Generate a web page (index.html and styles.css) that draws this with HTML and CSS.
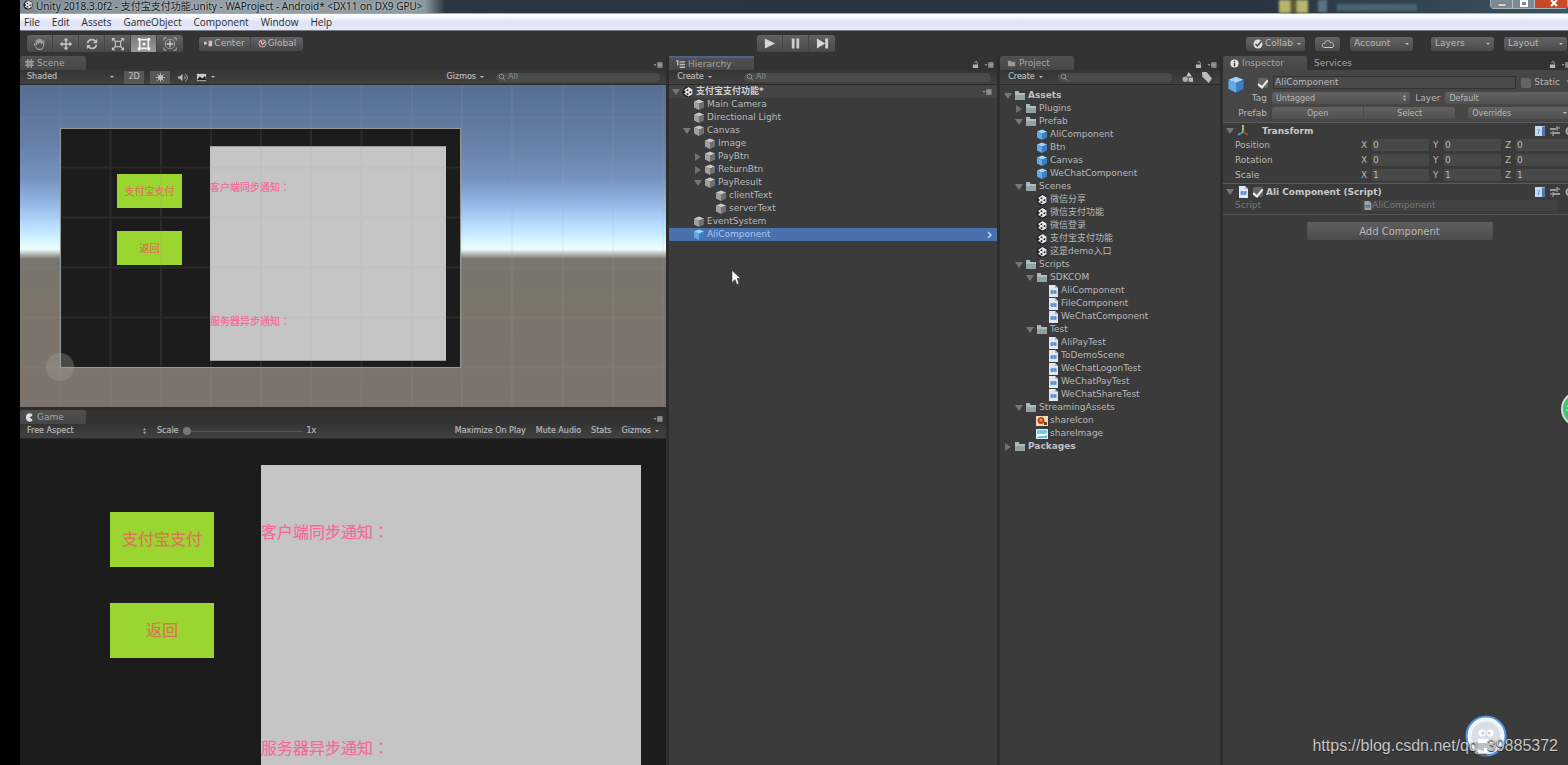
FILE: index.html
```html
<!DOCTYPE html>
<html lang="zh-CN">
<head>
<meta charset="utf-8">
<title>Unity 2018.3.0f2</title>
<link rel="stylesheet" href="styles.css">
</head>
<body>
<svg class="defs" aria-hidden="true">
  <defs>
    <symbol id="cube" viewBox="0 0 12 12"><path d="M6 .5 11 2.500 6 4.700 1 2.500Z" fill="var(--top)"/><path d="M1 2.500 6 4.700v6.400L1 8.500Z" fill="var(--left)"/><path d="M11 2.500 6 4.700v6.400l5-2.600Z" fill="var(--right)"/></symbol>
    <symbol id="folder" viewBox="0 0 12 12"><path d="M1 2h4l1 1h5v7H1Z" fill="#75878a"/><path d="M1 1h4v2H1Z" fill="#a5b6b7"/><path d="M1 4h10v6H1Z" fill="#93a3a4"/><path d="M1 3h10v2H1Z" fill="#b0bdbd"/></symbol>
    <symbol id="unity" viewBox="0 0 12 12"><circle cx="6" cy="6" r="5.500" fill="#222"/><path d="M6.500 1 10.500 3.400v4.800L6.500 10.600 2 7.800 4 6 2 4Z" fill="#ececec"/><path d="M7 6.200 9.300 4.800v2.600Zm-.700-.800L4 4.200 6.300 3Zm0 1.400v2.600L4 8Z" fill="#1c1c1c"/></symbol>
    <symbol id="script" viewBox="0 0 12 12"><path d="M2 0h6l3 3v9H2Z" fill="#dfe7f2"/><path d="M8 0v3h3" fill="#a9b6c8"/><path d="M3.500 5h6v4h-6Z" fill="#8fb0df"/><path d="M5.800 6H4.300v2h1.500M6.600 6.200h2.800M6.600 7.800h2.800" fill="none" stroke="#4d7fc8"/></symbol>
    <symbol id="menu" viewBox="0 0 12 8"><path d="M0 3h4L2 5Z" fill="#b5b5b5"/><path d="M5 1h7v6H5Z" fill="#777"/><path d="M5 1h7M5 3h7M5 5h7M5 7h7" stroke="#a8a8a8"/></symbol>
    <symbol id="lock" viewBox="0 0 8 8"><path d="M1 4h6v4H1Z" fill="#b5b5b5"/><path d="M3 2c0-2 3-2 3 0v2" fill="none" stroke="#aaa"/></symbol>
    <symbol id="search" viewBox="0 0 10 8"><circle cx="3.500" cy="3.500" r="2.300" fill="none" stroke="#8f8f8f"/><path d="m5 5 2 2.500" stroke="#8f8f8f"/></symbol>
    <symbol id="sheet" viewBox="0 0 10 10"><path d="M0 0h10v10H0Z" fill="#8fb4e2"/><path d="M0 0h7v10H0Z" fill="#c3d9f2"/><path d="M7 1h3v9H7Z" fill="#5279ad"/><path d="M2.500 4c2-1 3 1 1 1.500V8" stroke="#5f8fca" fill="none"/></symbol>
    <symbol id="preset" viewBox="0 0 10 10"><path d="M0 3h6M3 7h7" stroke="#bbb" stroke-width="1.500"/><path d="M7 0v5M3 5v5M7 2h3M0 7h2" stroke="#bbb"/></symbol>
    <symbol id="gear" viewBox="0 0 10 10"><circle cx="5" cy="5" r="3.500" fill="none" stroke="#aaa" stroke-width="2"/></symbol>
  </defs>
</svg>

<main class="window">
  <header class="titlebar">
    <svg class="icon unity-logo"><use href="#unity"/></svg>
    <h1 class="title">Unity 2018.3.0f2 - 支付宝支付功能.unity - WAProject - Android* &lt;DX11 on DX9 GPU&gt;</h1>
    <div class="desktop-glimpse" aria-hidden="true"><span class="glimpse-yellow"></span><span class="glimpse-blue"></span><span class="glimpse-line"></span></div>
    <div class="caption-buttons">
      <button class="caption" aria-label="Minimize"><svg viewBox="0 0 12 8"><path d="M2 4h8v2H2Z" fill="#fff" stroke="#555" stroke-width=".500"/></svg></button>
      <button class="caption" aria-label="Restore"><svg viewBox="0 0 12 8"><path d="M3 1h6v5H3Z" fill="none" stroke="#fff" stroke-width="2"/></svg></button>
      <button class="caption caption-close" aria-label="Close"><svg viewBox="0 0 12 8"><path d="m3 0 6 6m0-6L3 6" stroke="#fff" stroke-width="2"/></svg></button>
    </div>
  </header>

  <nav class="menubar">
    <button>File</button><button>Edit</button><button>Assets</button><button>GameObject</button><button>Component</button><button>Window</button><button>Help</button>
  </nav>

  <section class="toolbar">
    <div class="tool-left">
      <div class="group tools">
        <button aria-label="Hand"><svg viewBox="0 0 16 16"><path d="M5 14c-1-3-4-4-3.500-6 1-.700 2 .500 2.500 1L3.500 4c.700-1 1.500 0 1.500.500l1 3L6 2.500c.700-1 1.500 0 1.500.500l.500 4 .500-4c.700-1 1.500 0 1.500.500V7.500l1.500-3c1-.500 1.500.500 1 1.500-.500 3-.500 6-2.500 8Z" fill="none" stroke="#bbb"/></svg></button>
        <button aria-label="Move"><svg viewBox="0 0 16 16"><path d="M8 3v10M3 8h10" stroke="#bbb" stroke-width="2"/><path d="m8 1 3 3H5Zm0 14 3-3H5ZM1 8l3-3v6Zm14 0-3-3v6Z" fill="#c6c6c6"/></svg></button>
        <button aria-label="Rotate"><svg viewBox="0 0 16 16"><path d="M3 7c1-5 7-5 9-2M13 9c-1 5-7 5-9 2" fill="none" stroke="#c2c2c2" stroke-width="2"/><path d="M14 2v5H9ZM2 14V9h5Z" fill="#c2c2c2"/></svg></button>
        <button aria-label="Scale"><svg viewBox="0 0 16 16"><path d="M5 5h6v6H5Z" fill="none" stroke="#bbb" stroke-width="1.500"/><path d="m2 2 3 3m6 6 3 3m0-12-3 3m-6 6-3 3" stroke="#bbb" stroke-width="1.500"/><path d="M1 1h4L1 5Zm14 0v4l-4-4ZM1 15v-4l4 4Zm14 0h-4l4-4Z" fill="#c6c6c6"/></svg></button>
        <button class="is-on" aria-label="Rect"><svg viewBox="0 0 16 16"><path d="M3 3h10v10H3Z" fill="none" stroke="#eee" stroke-width="2"/><path d="M1 1h3v3H1Zm11 0h3v3h-3ZM1 12h3v3H1Zm11 0h3v3h-3ZM6.500 6.500h3v3h-3Z" fill="#fff"/></svg></button>
        <button aria-label="Transform"><svg viewBox="0 0 16 16"><circle cx="8" cy="8" r="5.500" fill="none" stroke="#aaa"/><path d="M8 4v8M4 8h8" stroke="#ccc" stroke-width="1.500"/><path d="M1 4V1h3m8 0h3v3M1 12v3h3m8 0h3v-3" fill="none" stroke="#bbb"/></svg></button>
      </div>
      <div class="group pivots">
        <button><svg viewBox="0 0 10 10"><path d="M0 3h3v3H0Zm5-1h4v6H5Z" fill="#d0c4c4"/><path d="M3 4h3v1H3Z" fill="#a44"/></svg>Center</button>
        <button><svg viewBox="0 0 10 10"><circle cx="5" cy="5" r="4" fill="#8d5552" stroke="#bbb"/><path d="M3 2l2 4 3-3" stroke="#eee" fill="none"/></svg>Global</button>
      </div>
    </div>
    <div class="group playback">
      <button aria-label="Play"><svg viewBox="0 0 14 14"><path d="M2 1.500 13 7 2 12.500Z" fill="#d6d6d6"/></svg></button>
      <button aria-label="Pause"><svg viewBox="0 0 14 14"><path d="M3 1.500h3v11H3Zm5 0h3v11H8Z" fill="#ccc"/></svg></button>
      <button aria-label="Step"><svg viewBox="0 0 14 14"><path d="m1 1.500 9 5.500-9 5.500ZM10 1.500h3v11h-3Z" fill="#d6d6d6"/></svg></button>
    </div>
    <div class="tool-right">
      <button class="pill has-caret"><svg viewBox="0 0 10 10"><circle cx="5" cy="5" r="4.500" fill="#ddd"/><path d="m2.500 5 2 2 4-5" fill="none" stroke="#444" stroke-width="1.500"/></svg>Collab</button>
      <button class="pill cloud" aria-label="Cloud"><svg viewBox="0 0 14 10"><path d="M3.500 8.500c-3 0-3-4 0-4C4 1 9 1 9.500 3.500c4 0 4 5 1.500 5Z" fill="none" stroke="#ccc"/></svg></button>
      <button class="pill wide has-caret">Account</button>
      <button class="pill wide spaced has-caret">Layers</button>
      <button class="pill wide has-caret">Layout</button>
    </div>
  </section>

  <div class="docks">
    <div class="views">
      <section class="panel scene">
        <div class="tabs"><button class="tab"><svg viewBox="0 0 10 10"><circle cx="5" cy="5" r="4" fill="#777"/><path d="M3 0v10M7 0v10M0 3h10M0 7h10" stroke="#999" stroke-width="1.500"/></svg>Scene</button><button class="panel-menu" aria-label="Scene menu"><svg class="menu-icon"><use href="#menu"/></svg></button></div>
        <div class="strip">
          <button class="strip-item shading has-caret">Shaded</button>
          <button class="strip-item toggle">2D</button>
          <button class="strip-item toggle" aria-label="Lighting"><svg viewBox="0 0 12 12"><circle cx="6" cy="6" r="2.500" fill="#fff"/><path d="M6 1v10M1 6h10M2.500 2.500l7 7m0-7-7 7" stroke="#bbb"/></svg></button>
          <button class="strip-item" aria-label="Audio"><svg viewBox="0 0 12 12"><path d="M1 5h2l3-3v8L3 7H1Z" fill="#bbb"/><path d="M8 4c1 1 1 3 0 4m1-6c3 2 3 6 0 8" fill="none" stroke="#bbb"/></svg></button>
          <button class="strip-item has-caret" aria-label="Effects"><svg viewBox="0 0 12 12"><path d="M1 2h10v8H1Z" fill="#c8c8c8"/><path d="m1 9 3-4 3 2 3-3 1 5Z" fill="#222"/></svg></button>
          <span class="grow"></span>
          <button class="strip-item gizmos has-caret">Gizmos</button>
          <label class="search scene-search"><svg><use href="#search"/></svg><input aria-label="Search scene" placeholder="All"></label>
        </div>
        <div class="scene-view">
          <div class="ui-canvas">
            <button class="ui-btn ui-btn-pay">支付宝支付</button>
            <button class="ui-btn ui-btn-back">返回</button>
            <div class="result"><p class="note-client">客户端同步通知<span class="colon" lang="zh-TW">：</span></p><p class="note-server">服务器异步通知<span class="colon" lang="zh-TW">：</span></p></div>
          </div>
          <svg class="grid-lines" aria-hidden="true"><path d="M40.500 0v323M90.500 0v323M141 0v323M191 0v323M241 0v323M291 0v323M341.500 0v323M392 0v323M442 0v323M492 0v323M543 0v323M593 0v323M643 0v323M0 32.500h700M0 82.500h700M0 132.500h700M0 182.500h700M0 232.500h700M0 282.500h700" stroke="#b4aa96" stroke-opacity=".1" stroke-width="2"/></svg>
          <span class="pivot-dot"></span>
        </div>
      </section>

      <section class="panel game">
        <div class="tabs"><button class="tab"><svg viewBox="0 0 10 10"><path d="M8 1C3-1 1 2 1 5s2 6 7 4V7L5 5l3-2Z" fill="#ddd"/></svg>Game</button><button class="panel-menu" aria-label="Game menu"><svg class="menu-icon"><use href="#menu"/></svg></button></div>
        <div class="strip">
          <button class="strip-item aspect">Free Aspect<svg viewBox="0 0 4 8"><path d="m0 3 2-3 2 3ZM0 5l2 3 2-3Z" fill="#aaa"/></svg></button>
          <label class="scale">Scale <input type="range" min="1" max="5" value="1"><output>1x</output></label>
          <span class="grow"></span>
          <button class="strip-item">Maximize On Play</button><button class="strip-item">Mute Audio</button><button class="strip-item">Stats</button><button class="strip-item has-caret">Gizmos</button>
        </div>
        <div class="game-view">
          <div class="game-buttons"><button class="game-btn">支付宝支付</button><button class="game-btn">返回</button></div>
          <div class="game-result"><p>客户端同步通知<span class="colon" lang="zh-TW">：</span></p><p>服务器异步通知<span class="colon" lang="zh-TW">：</span></p></div>
        </div>
      </section>
    </div>

    <section class="panel hierarchy">
      <div class="tabs"><button class="tab focused"><svg viewBox="0 0 10 10"><path d="M0 1h3M2 1v5M4 2h6M4 5h6M4 8h6" stroke="#bbb" stroke-width="1.500"/></svg>Hierarchy</button><button class="panel-menu" aria-label="Hierarchy menu"><svg class="lock-icon"><use href="#lock"/></svg><svg class="menu-icon"><use href="#menu"/></svg></button></div>
      <div class="strip"><button class="strip-item create has-caret">Create</button><label class="search"><svg><use href="#search"/></svg><input aria-label="Search hierarchy" placeholder="All"></label></div>
      <ul class="tree">
        <li class="row scene-row"><i class="fold open"></i><svg class="icon"><use href="#unity"/></svg><span>支付宝支付功能*</span><svg class="menu-icon row-end"><use href="#menu"/></svg></li>
        <li class="row d1"><i class="fold"></i><svg class="icon"><use href="#cube"/></svg><span>Main Camera</span></li>
        <li class="row d1"><i class="fold"></i><svg class="icon"><use href="#cube"/></svg><span>Directional Light</span></li>
        <li class="row d1"><i class="fold open"></i><svg class="icon"><use href="#cube"/></svg><span>Canvas</span></li>
        <li class="row d2"><i class="fold"></i><svg class="icon"><use href="#cube"/></svg><span>Image</span></li>
        <li class="row d2"><i class="fold closed"></i><svg class="icon"><use href="#cube"/></svg><span>PayBtn</span></li>
        <li class="row d2"><i class="fold closed"></i><svg class="icon"><use href="#cube"/></svg><span>ReturnBtn</span></li>
        <li class="row d2"><i class="fold open"></i><svg class="icon"><use href="#cube"/></svg><span>PayResult</span></li>
        <li class="row d3"><i class="fold"></i><svg class="icon"><use href="#cube"/></svg><span>clientText</span></li>
        <li class="row d3"><i class="fold"></i><svg class="icon"><use href="#cube"/></svg><span>serverText</span></li>
        <li class="row d1"><i class="fold"></i><svg class="icon"><use href="#cube"/></svg><span>EventSystem</span></li>
        <li class="row d1 selected"><i class="fold"></i><svg class="icon prefab"><use href="#cube"/></svg><span>AliComponent</span><svg class="chevron row-end" viewBox="0 0 6 8"><path d="m1 1 3 3-3 3" fill="none" stroke="#b9d3f7" stroke-width="1.500"/></svg></li>
      </ul>
    </section>

    <section class="panel project">
      <div class="tabs"><button class="tab"><svg viewBox="0 0 10 10"><path d="M1 2h3l1 1h4v5H1Z" fill="#999"/></svg>Project</button><button class="panel-menu" aria-label="Project menu"><svg class="lock-icon"><use href="#lock"/></svg><svg class="menu-icon"><use href="#menu"/></svg></button></div>
      <div class="strip"><button class="strip-item create has-caret">Create</button><label class="search"><svg><use href="#search"/></svg><input aria-label="Search project"></label>
        <button class="strip-item" aria-label="Filter by type"><svg viewBox="0 0 10 10"><path d="m6 0 3 4H4Z" fill="#ccc"/><circle cx="3" cy="6.500" r="2.500" fill="#aaa"/><path d="M6 5h4v4H6Z" fill="#bbb"/></svg></button>
        <button class="strip-item" aria-label="Filter by label"><svg viewBox="0 0 10 10"><path d="M1 0h4l5 6-3 4-6-6Z" fill="#bbb"/></svg></button></div>
      <ul class="tree assets">
        <li class="row root"><i class="fold open"></i><svg class="icon"><use href="#folder"/></svg><span>Assets</span></li>
        <li class="row d1"><i class="fold closed"></i><svg class="icon"><use href="#folder"/></svg><span>Plugins</span></li>
        <li class="row d1"><i class="fold open"></i><svg class="icon"><use href="#folder"/></svg><span>Prefab</span></li>
        <li class="row d2"><i class="fold"></i><svg class="icon prefab"><use href="#cube"/></svg><span>AliComponent</span></li>
        <li class="row d2"><i class="fold"></i><svg class="icon prefab"><use href="#cube"/></svg><span>Btn</span></li>
        <li class="row d2"><i class="fold"></i><svg class="icon prefab"><use href="#cube"/></svg><span>Canvas</span></li>
        <li class="row d2"><i class="fold"></i><svg class="icon prefab"><use href="#cube"/></svg><span>WeChatComponent</span></li>
        <li class="row d1"><i class="fold open"></i><svg class="icon"><use href="#folder"/></svg><span>Scenes</span></li>
        <li class="row d2"><i class="fold"></i><svg class="icon"><use href="#unity"/></svg><span>微信分享</span></li>
        <li class="row d2"><i class="fold"></i><svg class="icon"><use href="#unity"/></svg><span>微信支付功能</span></li>
        <li class="row d2"><i class="fold"></i><svg class="icon"><use href="#unity"/></svg><span>微信登录</span></li>
        <li class="row d2"><i class="fold"></i><svg class="icon"><use href="#unity"/></svg><span>支付宝支付功能</span></li>
        <li class="row d2"><i class="fold"></i><svg class="icon"><use href="#unity"/></svg><span>这是demo入口</span></li>
        <li class="row d1"><i class="fold open"></i><svg class="icon"><use href="#folder"/></svg><span>Scripts</span></li>
        <li class="row d2"><i class="fold open"></i><svg class="icon"><use href="#folder"/></svg><span>SDKCOM</span></li>
        <li class="row d3"><i class="fold"></i><svg class="icon"><use href="#script"/></svg><span>AliComponent</span></li>
        <li class="row d3"><i class="fold"></i><svg class="icon"><use href="#script"/></svg><span>FileComponent</span></li>
        <li class="row d3"><i class="fold"></i><svg class="icon"><use href="#script"/></svg><span>WeChatComponent</span></li>
        <li class="row d2"><i class="fold open"></i><svg class="icon"><use href="#folder"/></svg><span>Test</span></li>
        <li class="row d3"><i class="fold"></i><svg class="icon"><use href="#script"/></svg><span>AliPayTest</span></li>
        <li class="row d3"><i class="fold"></i><svg class="icon"><use href="#script"/></svg><span>ToDemoScene</span></li>
        <li class="row d3"><i class="fold"></i><svg class="icon"><use href="#script"/></svg><span>WeChatLogonTest</span></li>
        <li class="row d3"><i class="fold"></i><svg class="icon"><use href="#script"/></svg><span>WeChatPayTest</span></li>
        <li class="row d3"><i class="fold"></i><svg class="icon"><use href="#script"/></svg><span>WeChatShareTest</span></li>
        <li class="row d1"><i class="fold open"></i><svg class="icon"><use href="#folder"/></svg><span>StreamingAssets</span></li>
        <li class="row d2"><i class="fold"></i><svg class="icon" viewBox="0 0 12 12"><path d="M0 1h12v10H0Z" fill="#f0dcc6"/><circle cx="5" cy="5.500" r="3.500" fill="#c5450f"/><circle cx="5" cy="5" r="1.500" fill="#f59a3c"/><path d="M8 7h3v3H8Z" fill="#7a3c08"/></svg><span>shareIcon</span></li>
        <li class="row d2"><i class="fold"></i><svg class="icon" viewBox="0 0 12 12"><path d="M0 1h12v10H0Z" fill="#d9eff8"/><path d="M1 2h10v4H1Z" fill="#7fc6ec"/><path d="M1 7c3-3 6 1 10-2v2L1 9Z" fill="#fff"/><path d="M1 9c3-2 6 0 10-2v3H1Z" fill="#6dbdd0"/></svg><span>shareImage</span></li>
        <li class="row root"><i class="fold closed"></i><svg class="icon"><use href="#folder"/></svg><span>Packages</span></li>
      </ul>
    </section>

    <section class="panel inspector">
      <div class="tabs"><button class="tab"><svg viewBox="0 0 10 10"><circle cx="5" cy="5" r="4.500" fill="#e4e4e4"/><path d="M5 2v1.500M5 4.500V8" stroke="#333" stroke-width="1.500"/></svg>Inspector</button><button class="tab plain">Services</button><button class="panel-menu" aria-label="Inspector menu"><svg class="lock-icon"><use href="#lock"/></svg><svg class="menu-icon"><use href="#menu"/></svg></button></div>
      <div class="inspector-body">
        <div class="object-head">
          <svg class="big-cube prefab"><use href="#cube"/></svg>
          <div class="head-row name-row"><input type="checkbox" checked aria-label="Active"><input class="name" aria-label="Name" value="AliComponent"><label class="static"><input type="checkbox"><span>Static</span><i class="fold open"></i></label></div>
          <div class="head-row">
            <label class="head-label" for="tag">Tag</label>
            <div class="drop tag"><select id="tag"><option>Untagged</option></select><svg viewBox="0 0 4 8"><path d="m0 3 2-3 2 3ZM0 5l2 3 2-3Z" fill="#bbb"/></svg></div>
            <label for="layer">Layer</label>
            <div class="drop layer"><select id="layer"><option>Default</option></select><svg viewBox="0 0 4 8"><path d="m0 3 2-3 2 3ZM0 5l2 3 2-3Z" fill="#bbb"/></svg></div>
          </div>
          <div class="head-row"><span class="head-label">Prefab</span><div class="prefab-pair"><button>Open</button><button>Select</button></div><button class="overrides has-caret">Overrides</button></div>
        </div>
        <div class="component">
          <div class="component-title"><i class="fold open"></i><svg class="icon" viewBox="0 0 12 12"><path d="M6 7V0" stroke="#9ccb35" stroke-width="2"/><path d="m6 7 5 3" stroke="#c8371d" stroke-width="2"/><path d="m6 7-5 3" stroke="#3fa3d8" stroke-width="2"/></svg><h2 class="indented">Transform</h2><span class="component-icons"><svg><use href="#sheet"/></svg><svg><use href="#preset"/></svg><svg><use href="#gear"/></svg></span></div>
          <div class="vector"><span>Position</span><label>X <input value="0"></label><label>Y <input value="0"></label><label>Z <input value="0"></label></div>
          <div class="vector"><span>Rotation</span><label>X <input value="0"></label><label>Y <input value="0"></label><label>Z <input value="0"></label></div>
          <div class="vector"><span>Scale</span><label>X <input value="1"></label><label>Y <input value="1"></label><label>Z <input value="1"></label></div>
        </div>
        <div class="component last">
          <div class="component-title"><i class="fold open"></i><svg class="icon"><use href="#script"/></svg><input type="checkbox" id="ali" checked><h2><label for="ali">Ali Component (Script)</label></h2><span class="component-icons"><svg><use href="#sheet"/></svg><svg><use href="#preset"/></svg><svg><use href="#gear"/></svg></span></div>
          <div class="script-row"><span>Script</span><button class="object-field" disabled><svg><use href="#script"/></svg>AliComponent</button></div>
        </div>
        <button class="add">Add Component</button>
      </div>
    </section>
  </div>
</main>

<svg class="cursor" viewBox="0 0 10 16" aria-hidden="true"><path d="M1 1v12l3-3 2 5 2-1-2-5h3.500Z" fill="#fff" stroke="#333" stroke-width=".500"/></svg>
<button class="badge-green" aria-label="Assistant"><svg viewBox="0 0 36 36"><circle cx="18" cy="18" r="17" fill="#45c36f" stroke="#d3ddd6" stroke-width="2"/><path d="M6 15h6M5 19h6" stroke="#c9f0d5"/></svg></button>
<button class="badge-robot" aria-label="Robot"><svg viewBox="0 0 42 42"><circle cx="21" cy="21" r="19.500" fill="#f1f6fb" stroke="#4f94e0" stroke-width="2"/><circle cx="21" cy="21" r="14.500" fill="#d8dfe6"/><path d="M7 27h28c-2 6-8 9-14 9S9 33 7 27Z" fill="#b9c3cd"/><circle cx="17" cy="18" r="3.500" fill="#fff"/><circle cx="25" cy="18" r="3.500" fill="#fff"/><circle cx="18" cy="18" r="1.500" fill="#c2ccd5"/><circle cx="24" cy="18" r="1.500" fill="#c2ccd5"/><path d="M13 24h16v4H13ZM19 33h5v4h-5Z" fill="#fff"/></svg></button>
<a class="watermark" href="#">https://blog.csdn.net/qq_39885372</a>
</body>
</html>
```
FILE: styles.css
```css
* { box-sizing: border-box; }
body {
  margin: 0;
  height: 100vh;
  padding-left: 20px;
  overflow: hidden;
  position: relative;
  background: #000;
  color: #b8b8b8;
  font: 9px/13px "DejaVu Sans", "Noto Sans CJK SC", sans-serif;
  --top: #c6c6c6;
  --left: #a0a0a0;
  --right: #707070;
}
button, input, select, output { font: inherit; color: inherit; }
button { border: 0; padding: 0; margin: 0; background: none; white-space: nowrap; }
h1, h2, p, ul { margin: 0; padding: 0; font-weight: normal; }
ul { list-style: none; }
svg { display: block; flex: none; }
.defs { position: absolute; width: 0; height: 0; }
.icon { width: 12px; height: 12px; }
.prefab { --top: #a5d3f8; --left: #64a9e8; --right: #3b7fc4; }
.grow { flex: 1; }
.colon { font-family: "Noto Sans CJK TC", sans-serif; }

.window { display: flex; flex-direction: column; height: 100%; background: #333; }

.titlebar {
  display: flex;
  align-items: flex-start;
  height: 14px;
  border-bottom: 1px solid #a4adb2;
  background: linear-gradient(90deg, #7f8b94, #93a0a6 200px, #8b989f 405px, #2a3743 425px, #293641 80%, #3b5262);
  color: #15191c;
}
.titlebar .unity-logo { margin: 0 3px; width: 10px; height: 10px; }
.title { font: 10px/12px "Noto Sans", "Noto Sans CJK SC", sans-serif; white-space: nowrap; text-shadow: 0 0 3px #dde3e6; }
.desktop-glimpse { display: flex; gap: 10px; margin-left: auto; width: 211px; filter: blur(1px); }
.glimpse-yellow { flex: none; width: 29px; height: 13px; background: linear-gradient(90deg, #b7b46d 11px, #5d5c36 12px 17px, #b7b46d 18px); }
.glimpse-blue { width: 9px; height: 12px; background: #5a7384; }
.glimpse-line { width: 80px; height: 7px; margin-top: 4px; background: #4a6373; }
.caption-buttons { display: flex; height: 9px; border: 1px solid #a9b5bb; border-top: 0; border-radius: 0 0 4px 4px; }
.caption { width: 22px; height: 8px; background: #7c8a94; border-right: 1px solid #b5bec4; }
.caption svg { width: 12px; height: 8px; margin: auto; }
.caption-close { width: 32px; background: #c9492a; border: 0; }
.caption-close svg { margin-left: 13px; }

.menubar {
  display: flex;
  gap: 12px;
  height: 17px;
  padding-left: 4px;
  background: linear-gradient(#fff, #f2f5fd 4px, #dfe4f6 8px, #e3e7f8);
  border-bottom: 1px solid #777c86;
  color: #2b2b2b;
  font: 10px/15px "Open Sans", sans-serif;
}

.toolbar { display: grid; grid-template-columns: 1fr auto 1fr; align-items: center; height: 25px; background: #333; }
.tool-left { display: flex; align-items: center; gap: 16px; padding-left: 7px; }
.group { display: flex; border-radius: 3px; overflow: hidden; background: linear-gradient(#626262, #484848); }
.group button { display: flex; align-items: center; justify-content: center; border-right: 1px solid #454545; }
.group button:last-child { border-right: 0; }
.tools button { width: 26px; height: 17px; }
.tools svg { width: 14px; height: 14px; }
.tools .is-on { background: linear-gradient(#777, #9a9a9a); }
.pivots button { width: 52px; height: 14px; gap: 1px; }
.pivots svg { width: 9px; height: 9px; }
.playback { margin-left: 4px; }
.playback button { width: 26px; height: 17px; }
.playback svg { width: 13px; height: 13px; }
.tool-right { display: flex; justify-content: flex-end; gap: 10px; padding-right: 1px; }
.pill { display: flex; align-items: center; height: 14px; padding: 0 4px; border-radius: 3px; background: linear-gradient(#646464, #4b4b4b); }
.pill svg { width: 10px; height: 10px; margin: 0 2px 0 3px; }
.pill.cloud { width: 25px; }
.pill.cloud svg { width: 14px; margin: 0 2px; }
.pill.wide { width: 63px; }
.pill.spaced { margin-left: 8px; }
.has-caret::after { content: ""; margin-left: 4px; border: 2px solid transparent; border-top-color: #bbb; border-bottom-width: 0; }
.pill.wide::after { margin-left: auto; }

.docks { flex: 1; min-height: 0; display: grid; grid-template-columns: 646fr 328fr 220fr 345fr; gap: 3px; background: #2d2d2d; }
.views { display: grid; grid-template-rows: 351fr 355fr; gap: 3px; min-width: 0; min-height: 0; }
.panel { display: flex; flex-direction: column; min-width: 0; min-height: 0; overflow: hidden; background: #3b3b3b; }
.tabs { display: flex; flex: none; height: 14px; background: #323232; }
.tab { display: flex; align-items: center; gap: 3px; min-width: 66px; padding: 1px 12px 0 5px; border-radius: 3px 3px 0 0; background: linear-gradient(#505050, #474747); color: #a5a5a5; }
.tab svg { width: 9px; height: 9px; }
.tab.focused { min-width: 85px; padding: 0 12px 0 7px; border-top: 2px solid #49658c; border-radius: 0; }
.project .tab { min-width: 74px; padding-left: 7px; }
.tab.plain { background: none; }
.panel-menu { display: flex; align-items: center; gap: 4px; margin-left: auto; padding: 3px 2px 0 0; }
.menu-icon { width: 12px; height: 6px; }
.lock-icon { width: 7px; height: 7px; }
.strip { display: flex; flex: none; align-items: center; height: 15px; background: linear-gradient(#343434, #414141); border-bottom: 1px solid #2a2a2a; font-size: 8px; line-height: 12px; -webkit-text-stroke: 0.2px; }
.strip-item { display: flex; align-items: center; justify-content: center; height: 13px; padding: 0 4px; }
.strip-item svg { width: 11px; height: 11px; }
.shading { width: 98px; padding-left: 7px; justify-content: flex-start; }
.shading::after { margin-left: auto; }
.toggle { width: 20px; margin-left: 6px; padding: 0; background: #585858; }
.toggle + .strip-item:not(.toggle) { margin-left: 3px; }
.gizmos { margin-right: 8px; }
.search { display: flex; align-items: center; height: 9px; margin-right: 6px; padding-left: 2px; border-radius: 5px; background: #4b4b4b; color: #858585; -webkit-text-stroke: 0; }
.search svg { width: 10px; height: 8px; }
.search input { flex: 1; min-width: 0; width: 100%; height: 9px; padding: 0; border: 0; outline: 0; background: none; }
.search input::placeholder { color: #8e8e8e; opacity: 1; }
.scene-search { width: 164px; }
.create { width: 50px; padding-left: 5px; }
.hierarchy .search { flex: 1; margin-left: 25px; }
.project .search { flex: 1; margin: 0 6px 0 8px; }
.project .strip-item:last-child { margin-right: 4px; }

.scene-view { position: relative; flex: 1; overflow: hidden; background: linear-gradient(#566e92, #637da5 16%, #7592be 29%, #95b8e5 37%, #b3daff 43%, #d4f4ff 48%, #efffff 51%, #77766f 54%, #7b756c 65%, #7c736d); }
.ui-canvas { position: absolute; left: 40px; top: 43px; width: 401px; height: 240px; border: 1px solid #8f9896; background: #1c1c1c; }
.ui-btn { position: absolute; left: 56px; width: 65px; height: 34px; background: #9ad530; color: #dd7458; font-size: 10px; -webkit-text-stroke: 0.2px; }
.ui-btn-pay { top: 45px; }
.ui-btn-back { top: 102px; }
.result { position: absolute; left: 149px; top: 17px; width: 236px; height: 215px; background: #c5c5c5; border: 1px solid #969c98; border-width: 1px 0; color: #f9689c; font-size: 10px; -webkit-text-stroke: 0.2px; }
.result p { position: absolute; left: 0; white-space: nowrap; }
.note-client { top: 33px; }
.note-server { top: 167px; }
.grid-lines { position: absolute; inset: 0; width: 100%; height: 100%; }
.pivot-dot { position: absolute; left: 26px; top: 268px; width: 28px; height: 28px; border-radius: 50%; background: #a9a69955; }

.game .strip { font-size: 8px; }
.game .strip-item { padding: 0 5px; }
.game .strip .aspect { width: 130px; padding: 0 4px 0 7px; justify-content: space-between; }
.strip-item.aspect svg { width: 3px; height: 6px; }
.scale { display: flex; align-items: center; gap: 4px; margin-left: 7px; }
.scale input { appearance: none; width: 120px; height: 9px; margin: 0; background: linear-gradient(#555, #555) center / 100% 1px no-repeat; }
.scale input::-webkit-slider-thumb { appearance: none; width: 8px; height: 8px; border-radius: 50%; background: #777; }
.game .strip-item:last-child { margin-right: 2px; }
.game-view { flex: 1; min-height: 0; display: flex; padding: 26px 25px 0 90px; background: #1c1c1c; overflow: hidden; }
.game-buttons { display: grid; gap: 36px; align-content: start; flex: none; margin-right: 47px; padding-top: 47px; }
.game-btn { width: 104px; height: 55px; background: #9ad530; color: #dd7458; font-size: 16px; -webkit-text-stroke: 0.2px; }
.game-result { display: grid; align-content: start; gap: 192px; flex: 1; padding-top: 54px; background: #c5c5c5; color: #f9689c; font-size: 16px; line-height: 24px; white-space: nowrap; -webkit-text-stroke: 0.2px; }
.game-result p { height: 24px; }

.row { display: flex; align-items: center; height: 13px; white-space: nowrap; }
.row span { margin-left: 2px; }
.row.d1 { padding-left: 11px; }
.row.d2 { padding-left: 22px; }
.row.d3 { padding-left: 33px; }
.fold { flex: none; display: grid; place-items: center; width: 13px; }
.fold.open::before { content: ""; border: 4px solid transparent; border-top: 6px solid #777; border-bottom: 0; }
.fold.closed::before { content: ""; border: 4px solid transparent; border-left: 6px solid #707070; border-right: 0; }
.scene-row { background: #444; color: #d0d0d0; font-weight: bold; }
.row .row-end { margin-left: auto; margin-right: 4px; }
.chevron { width: 6px; height: 8px; }
.selected { background: #4971ab; color: #a5c8ff; }
.assets { padding: 4px 0 0 1px; }
.root { font-weight: bold; color: #c0c0c0; }

.inspector-body { margin-right: -8px; flex: 1; }
.inspector .tab { padding-left: 7px; }
.inspector .tab:first-child { min-width: 84px; }
.inspector .panel-menu { margin-right: -6px; }
.object-head { display: grid; grid-template-columns: 23px 1fr; row-gap: 3px; padding: 6px 0 3px 4px; background: #464646; }
.big-cube { width: 18px; height: 18px; grid-row: 1; margin-bottom: -5px; }
.head-row { grid-column: 1 / -1; display: flex; align-items: center; gap: 5px; height: 12px; }
.name-row { grid-column: 2; grid-row: 1; height: 13px; }
.head-label { width: 40px; text-align: right; }
input[type="checkbox"] { appearance: none; display: grid; place-items: center; flex: none; width: 10px; height: 10px; margin: 0; background: #656565; border-radius: 2px; }
input[type="checkbox"]:checked::before { content: ""; width: 4px; height: 8px; border: solid #eee; border-width: 0 2px 2px 0; transform: rotate(40deg); }
.name-row > input[type="checkbox"] { margin-left: 8px; }
.name { flex: 1; min-width: 0; height: 13px; padding: 0 1px; border: 1px solid #323232; background: #4a4a4a; }
.static { display: flex; align-items: center; gap: 3px; }
.drop, .prefab-pair, .overrides { display: flex; align-items: center; height: 12px; border-radius: 3px; background: linear-gradient(#626262, #505050); font-size: 8px; line-height: 11px; }
.drop { min-width: 0; padding: 0 4px; }
.drop select { appearance: none; flex: 1; min-width: 0; height: 12px; padding: 0; border: 0; background: none; }
.drop svg { width: 3px; height: 6px; }
.tag { flex: 136; }
.layer { flex: 128; }
.prefab-pair { flex: 178; }
.prefab-pair button { flex: 1; height: 12px; }
.prefab-pair button + button { border-left: 1px solid #494949; }
.overrides { flex: 92; margin-left: 8px; padding: 0 9px 0 4px; }
.overrides::after { margin-left: auto; }
.component { border-top: 1px solid #5a5a5a; padding-top: 1px; }
.component-title { display: flex; align-items: center; gap: 1px; height: 14px; font-weight: bold; color: #c8c8c8; }
.component-title .icon { margin-right: 3px; }
.component-title h2 { font-size: 9px; font-weight: bold; margin-left: 2px; }
.component-title .indented { margin-left: 9px; }
.component-icons { display: flex; gap: 5px; margin-left: auto; margin-right: 1px; }
.component-icons svg { width: 10px; height: 10px; }
.vector { display: flex; align-items: center; height: 14px; margin-bottom: 1px; padding-left: 12px; gap: 4px; }
.vector > span { width: 122px; }
.vector label { display: flex; align-items: center; justify-content: space-between; gap: 4px; width: 68px; }
.vector input { width: 57px; height: 12px; padding: 0 1px; border: 0; background: #484848; }
.script-row { display: flex; height: 13px; align-items: center; padding-left: 12px; color: #777; }
.script-row > span { width: 126px; }
.object-field { display: flex; align-items: center; flex: 1; height: 11px; margin-right: 19px; padding-left: 2px; background: #424242; }
.object-field svg { width: 9px; height: 9px; opacity: .6; }
.component.last { border-bottom: 1px solid #555; margin-bottom: 7px; padding-bottom: 2px; }
.add { display: block; width: 186px; height: 18px; margin: 0 auto; border-radius: 2px; background: linear-gradient(#5e5e5e, #4b4b4b); font-size: 10px; }

.cursor { position: absolute; left: 731px; top: 269px; width: 10px; height: 17px; }
.badge-green { position: absolute; right: -29px; top: 391px; width: 36px; height: 36px; }
.badge-robot { position: absolute; right: 61px; bottom: 8px; width: 42px; height: 42px; }
.watermark { position: absolute; right: 10px; bottom: 9px; color: #c4c4c4; font: 16px/20px "Liberation Sans", sans-serif; text-decoration: none; text-shadow: 0 1px 1px #222; }
```
